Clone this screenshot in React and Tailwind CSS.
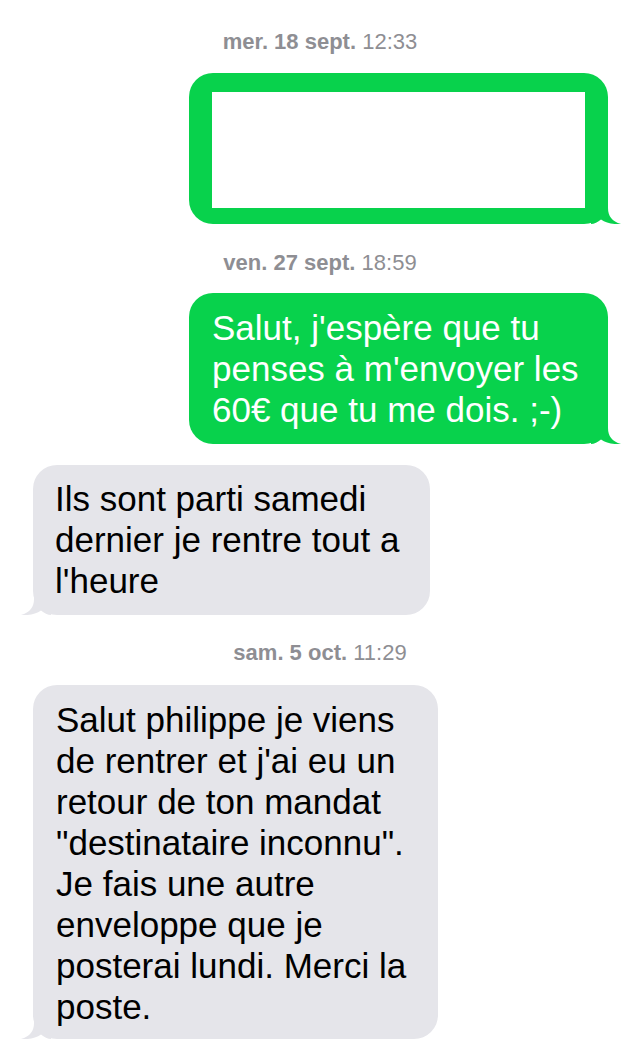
import React from 'react';

const font = { fontFamily: '"Liberation Sans", Arial, sans-serif' };

// petite queue de bulle (droite = envoyé, gauche = reçu)
const Tail = ({ side, color }) =>
  side === 'right' ? (
    <svg className="absolute right-[-13px] bottom-0" width="30" height="32" viewBox="0 0 30 32">
      <path d="M0 0 H17 V16 C17 24 21 29.5 30 32 C22 32.6 15 31 10 27.5 C7 30 3 32 0 32 Z" fill={color} />
    </svg>
  ) : (
    <svg className="absolute left-[-12px] bottom-0" width="30" height="32" viewBox="0 0 30 32">
      <path d="M30 0 H13 V16 C13 24 9 29.5 0 32 C8 32.6 15 31 20 27.5 C23 30 27 32 30 32 Z" fill={color} />
    </svg>
  );

const Stamp = ({ day, time, className }) => (
  <div className={`text-center text-[22px] leading-[26px] text-[#8e8e93] ${className}`}>
    <span className="font-bold">{day}</span> {time}
  </div>
);

const Lines = ({ lines }) =>
  lines.map((l, i) => (
    <React.Fragment key={i}>
      {l}
      {i < lines.length - 1 && <br />}
    </React.Fragment>
  ));

const App = () => {
  return (
    <div className="min-h-screen bg-white flex flex-col" style={font}>
      <Stamp day="mer. 18 sept." time="12:33" className="mt-[29px]" />

      {/* Bulle avec image masquée */}
      <div className="mt-[18px] self-end mr-[32px] relative">
        <div className="w-[419px] rounded-[24px] bg-[#08d24c] pl-[23px] pr-[23px] pt-[19px] pb-[16px]">
          <div className="w-[373px] h-[116px] bg-white" />
        </div>
        <Tail side="right" color="#08d24c" />
      </div>

      <Stamp day="ven. 27 sept." time="18:59" className="mt-[26px]" />

      <div className="mt-[17px] self-end mr-[32px] relative">
        <div className="w-[419px] rounded-[24px] bg-[#08d24c] pl-[23px] pr-[12px] pt-[14px] pb-[14px] text-white text-[35px] leading-[41px] whitespace-nowrap">
          <Lines lines={["Salut, j'espère que tu", "penses à m'envoyer les", '60€ que tu me dois. ;-)']} />
        </div>
        <Tail side="right" color="#08d24c" />
      </div>

      <div className="mt-[21px] self-start ml-[33px] relative">
        <div className="w-[397px] rounded-[24px] bg-[#e5e5ea] pl-[22px] pr-[10px] pt-[13px] pb-[14px] text-black text-[35px] leading-[41px] whitespace-nowrap">
          <Lines lines={['Ils sont parti samedi', 'dernier je rentre tout a', "l'heure"]} />
        </div>
        <Tail side="left" color="#e5e5ea" />
      </div>

      <Stamp day="sam. 5 oct." time="11:29" className="mt-[25px]" />

      <div className="mt-[19px] self-start ml-[33px] relative">
        <div className="w-[405px] rounded-[24px] bg-[#e5e5ea] pl-[23px] pr-[10px] pt-[14px] pb-[12px] text-black text-[35px] leading-[41px] whitespace-nowrap">
          <Lines
            lines={[
              'Salut philippe je viens',
              "de rentrer et j'ai eu un",
              'retour de ton mandat',
              '"destinataire inconnu".',
              'Je fais une autre',
              'enveloppe que je',
              'posterai lundi. Merci la',
              'poste.',
            ]}
          />
        </div>
        <Tail side="left" color="#e5e5ea" />
      </div>
    </div>
  );
};

export default App;
